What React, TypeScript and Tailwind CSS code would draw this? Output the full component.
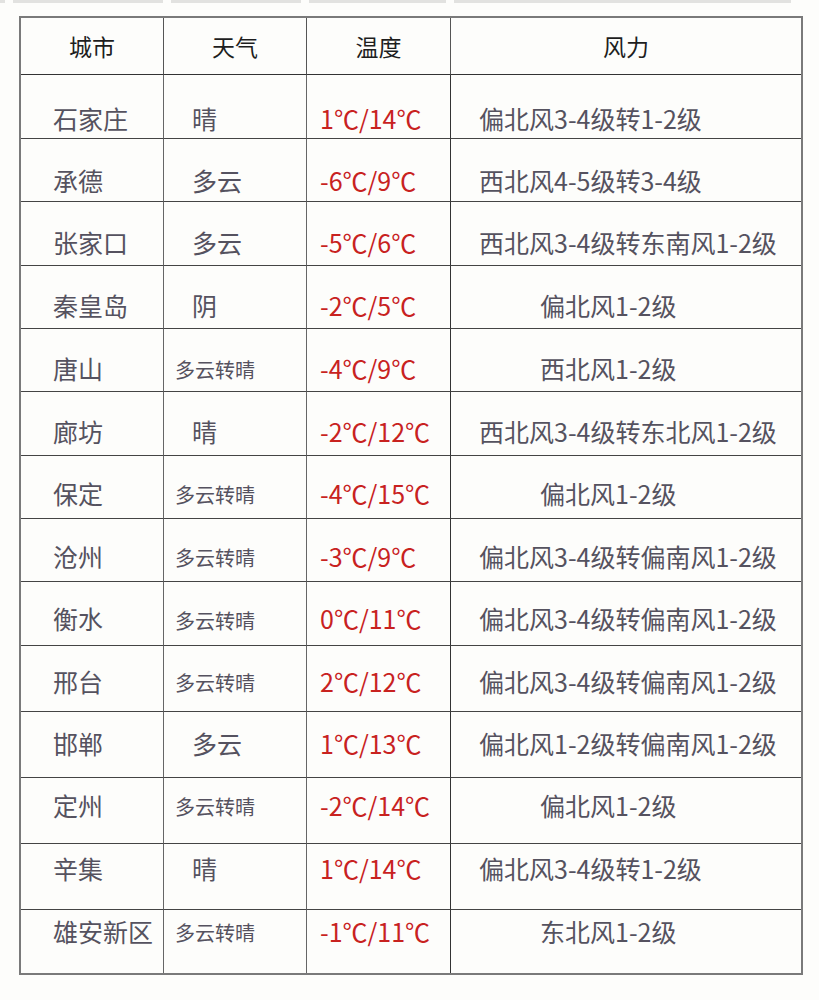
import React from "react";

type Row = {
  city: string;
  weather: string;
  temp: string;
  wind: string;
  windIndent?: boolean;
  h: number;
  c: number;
};

const rows: Row[] = [
  { city: "石家庄", weather: "晴", temp: "1℃/14℃", wind: "偏北风3-4级转1-2级", h: 64, c: 45 },
  { city: "承德", weather: "多云", temp: "-6℃/9℃", wind: "西北风4-5级转3-4级", h: 63.3, c: 43 },
  { city: "张家口", weather: "多云", temp: "-5℃/6℃", wind: "西北风3-4级转东南风1-2级", h: 63.3, c: 42 },
  { city: "秦皇岛", weather: "阴", temp: "-2℃/5℃", wind: "偏北风1-2级", windIndent: true, h: 63.3, c: 41 },
  { city: "唐山", weather: "多云转晴", temp: "-4℃/9℃", wind: "西北风1-2级", windIndent: true, h: 63.4, c: 41 },
  { city: "廊坊", weather: "晴", temp: "-2℃/12℃", wind: "西北风3-4级转东北风1-2级", h: 63.3, c: 41 },
  { city: "保定", weather: "多云转晴", temp: "-4℃/15℃", wind: "偏北风1-2级", windIndent: true, h: 63.4, c: 39 },
  { city: "沧州", weather: "多云转晴", temp: "-3℃/9℃", wind: "偏北风3-4级转偏南风1-2级", h: 63.5, c: 39 },
  { city: "衡水", weather: "多云转晴", temp: "0℃/11℃", wind: "偏北风3-4级转偏南风1-2级", h: 63.5, c: 38 },
  { city: "邢台", weather: "多云转晴", temp: "2℃/12℃", wind: "偏北风3-4级转偏南风1-2级", h: 66, c: 37 },
  { city: "邯郸", weather: "多云", temp: "1℃/13℃", wind: "偏北风1-2级转偏南风1-2级", h: 66, c: 33 },
  { city: "定州", weather: "多云转晴", temp: "-2℃/14℃", wind: "偏北风1-2级", windIndent: true, h: 66, c: 29 },
  { city: "辛集", weather: "晴", temp: "1℃/14℃", wind: "偏北风3-4级转1-2级", h: 66, c: 26 },
  { city: "雄安新区", weather: "多云转晴", temp: "-1℃/11℃", wind: "东北风1-2级", windIndent: true, h: 63, c: 23 },
];

const font = { fontFamily: '"Noto Sans CJK SC", "Noto Sans", sans-serif' };

export default function App() {
  return (
    <div className="w-[819px] h-[1000px] bg-[#fdfdfb] overflow-hidden" style={font}>
      <div className="flex h-[3px] gap-[8px]">
        <div className="w-[5px] bg-[#e2e2e0]" />
        <div className="w-[150px] bg-[#e2e2e0]" />
        <div className="w-[130px] bg-[#e2e2e0]" />
        <div className="w-[137px] bg-[#e2e2e0]" />
        <div className="w-[337px] bg-[#e2e2e0]" />
      </div>
      <div className="pl-[19px] pt-[13px]">
        <div className="w-[784px] border-2 border-[#7a7a7a] grid grid-cols-[143px_143px_144px_350px]">
          {["城市", "天气", "温度", "风力"].map((h, i) => (
            <div
              key={h}
              className={`h-[57px] flex items-center justify-center text-[23px] text-[#1e1e1e] border-b border-[#333] ${i < 3 ? "border-r border-r-[#555]" : ""}`}
            >
              {h}
            </div>
          ))}
          {rows.map((r, idx) => {
            const last = idx === rows.length - 1;
            const rb = last ? "" : "border-b border-[#444]";
            const big = { height: `${r.h}px`, paddingTop: `${r.c - 14}px` };
            const small = { height: `${r.h}px`, paddingTop: `${r.c - 9.5}px` };
            return (
              <React.Fragment key={r.city}>
                <div style={big} className={`${rb} border-r border-r-[#666] flex items-start pl-[32px] text-[25px] text-[#55525f] leading-none`}>
                  {r.city}
                </div>
                <div
                  style={r.weather.length > 2 ? small : big}
                  className={`${rb} border-r border-r-[#666] flex items-start leading-none text-[#55525f] ${
                    r.weather.length > 2 ? "pl-[11px] text-[20px]" : "pl-[28px] text-[25px]"
                  }`}
                >
                  {r.weather}
                </div>
                <div style={big} className={`${rb} border-r border-r-[#333] flex items-start pl-[13px] text-[25px] text-[#c8221f] leading-none`}>
                  {r.temp}
                </div>
                <div
                  style={big}
                  className={`${rb} flex items-start text-[25px] text-[#55525f] leading-none ${
                    r.windIndent ? "pl-[89px]" : "pl-[28px]"
                  }`}
                >
                  {r.wind}
                </div>
              </React.Fragment>
            );
          })}
        </div>
      </div>
    </div>
  );
}
